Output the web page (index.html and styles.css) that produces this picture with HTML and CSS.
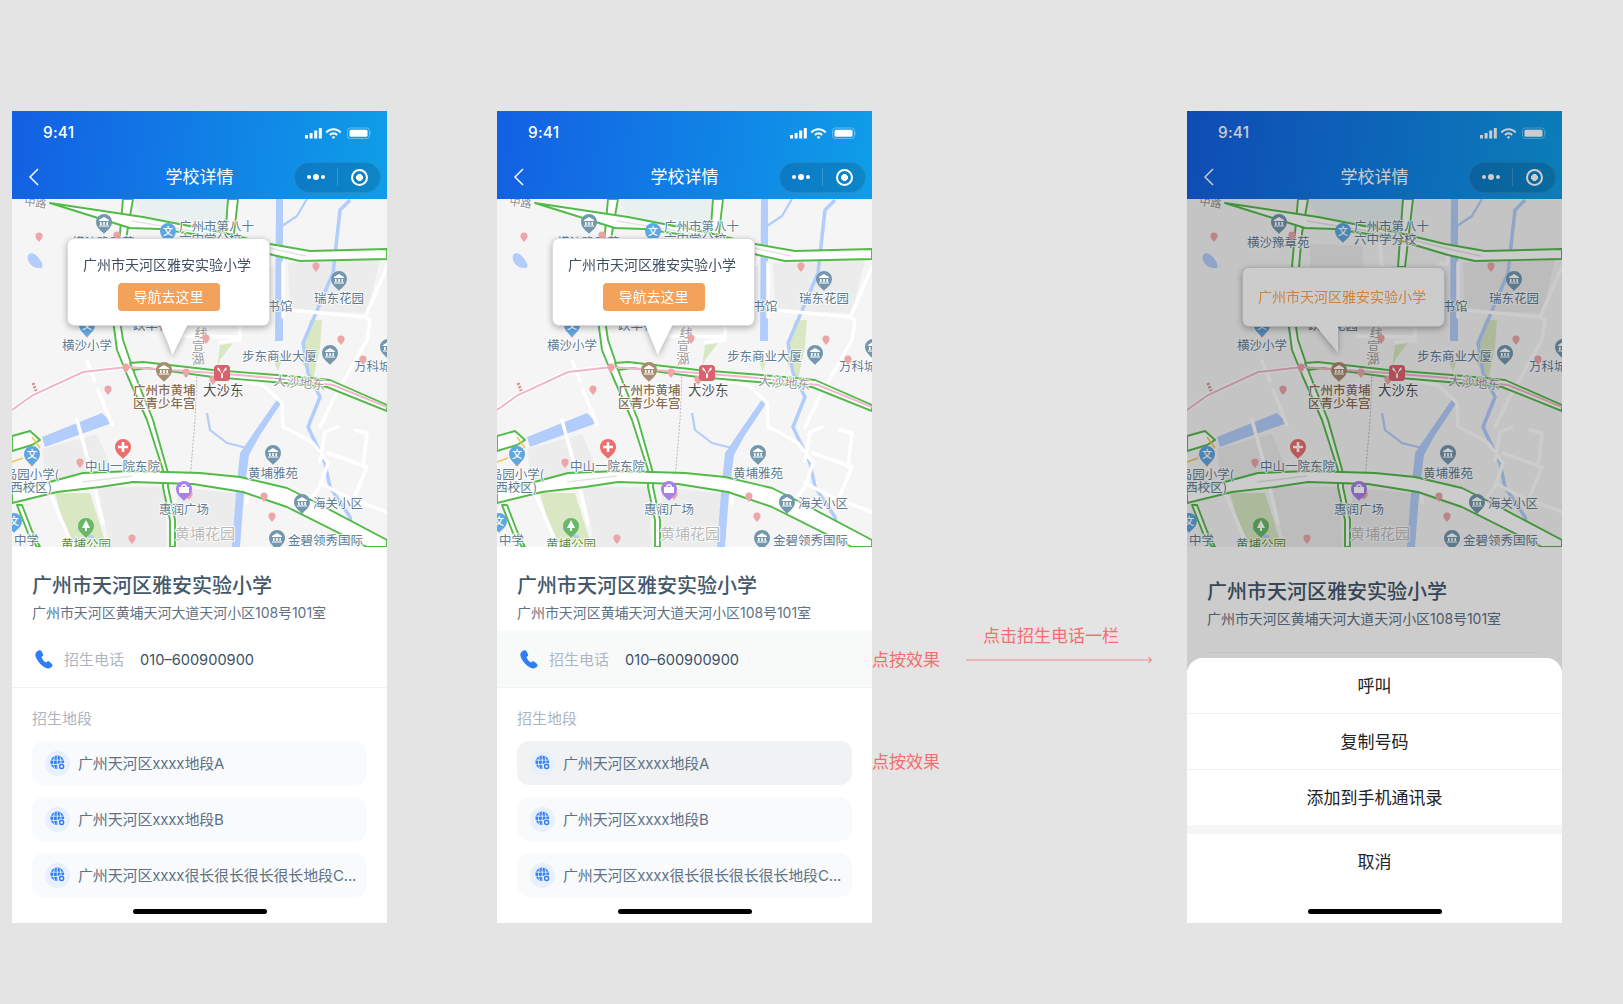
FILE: index.html
```html
<!DOCTYPE html>
<html lang="zh-CN">
<head>
<meta charset="utf-8">
<title>学校详情</title>
<link rel="stylesheet" href="styles.css">
</head>
<body>
<svg class="sprite" xmlns="http://www.w3.org/2000/svg">
  <defs>
    <g id="pt"><path class="c-pink" d="M0 5C-1.6 2.8-3.6 1.4-3.6-1a3.6 3.6 0 0 1 7.2 0C3.6 1.4 1.6 2.8 0 5Z"/></g>
    <g id="pin-shape"><path d="M0 12C-2 9-8 6-8 0a8 8 0 0 1 16 0C8 6 2 9 0 12Z"/></g>
    <g id="bld"><path class="c-white" d="M0-5L5-2V-1H-5V-2ZM-4 0h1.6v3H-4zM-.8 0h1.6v3H-.8zM2.4 0h1.6v3H2.4zM-5 3.4h10v1.2H-5z"/></g>
    <g id="poi" class="c-poi"><use href="#pin-shape"/><use href="#bld"/></g>
    <g id="mus" class="c-mus"><use href="#pin-shape"/><use href="#bld"/></g>
    <g id="edu" class="c-edu"><use href="#pin-shape"/><text class="pin-txt" x="0" y="4">文</text></g>
    <g id="hos" class="c-hos"><use href="#pin-shape"/><path class="c-white" d="M-1.3-5h2.6v3.7H5v2.6H1.3V5h-2.6V1.3H-5v-2.6h3.7Z"/></g>
    <g id="mall" class="c-mall"><use href="#pin-shape"/><path class="c-white" d="M-5-2H5V4H-5ZM-3-2C-3-6 3-6 3-2H1.6C1.6-4-1.6-4-1.6-2Z"/></g>
    <g id="park" class="c-park"><use href="#pin-shape"/><path class="c-white" d="M0-6L4 2H1V5H-1V2H-4Z"/></g>
    <g id="metro"><rect class="c-metro" x="-8" y="-8" width="16" height="16" rx="3.5"/><path class="c-white" d="M-4.5-5.500C-3.500-5.500-3-5-2.500-4L-.9-1V5H.9V-1L2.500-4C3-5 3.500-5.500 4.500-5.500V-3C2.500-2.500 1.500-1 .9 .5H-.9C-1.500-1-2.500-2.500-4.500-3Z"/></g>

    <symbol id="map" viewBox="0 0 375 348">
      <rect class="m-bg" width="375" height="348"/>
      <path class="m-school" d="M121 0H221L215 36 131 18Z"/>
      <path class="m-block" d="M276 64L368 61 355 114 278 111ZM30 250L85 235 100 270 35 290ZM85 288H152L155 348H98ZM165 288L228 295 222 348H165ZM123 45L176 47V90H123Z"/>
      <path class="m-park" d="M298 121H310L308 148 301 181 290 164 291 144ZM208 146L221 144 208 161 205 169ZM43 294H78L95 348H58ZM262 163L270 160 266 172Z"/>

      <path class="m-water" d="M16 56C20 52 25 56 28 61 32 66 31 70 27 69 20 69 14 62 16 56ZM30 238L90 214 100 224 33 248ZM264 0H271V142H263ZM266 199L270 203 248 236 237 256 232 295 228 348H220L224 294 228 254 243 232Z"/>
      <path class="m-river" d="M338 1L328 11 321 74 301 121 291 144 296 174 308 198 296 228 313 264 318 288 338 318 341 338"/>
      <path class="m-river-s" d="M195 214L198 231 215 244 235 249M295 0L285 17 270 27"/>
      <path class="m-pond" d="M66 329C72 334 76 338 82 338"/>

      <path class="m-way" d="M75 162L83 182M86 191L100 226M65 221L76 261 91 324M208 178L251 186 270 204 271 228 278 231 301 244 316 264 308 288 298 301M308 228L321 201 355 141 358 121 353 118 278 111M375 68L353 118M316 254L355 268 341 301M343 231L355 234 351 268M313 233L325 228M308 284L335 298 375 313M38 294L61 348M271 64V118M208 143L228 141 228 128M170 137L226 138M193 47L195 66M253 65L260 65 261 57M235 284V304M313 233L308 262"/>

      <path class="m-rail" d="M21 184L25 194"/>
      <path class="m-metro" d="M185 174L183 221 178 281"/>

      <path class="m-band" d="M111 0L108 34 105 68 101 121 105 151 116 178 135 221 151 271 151 288 158 321 158 348H163L163 321 156 288 156 274 141 221 123 176 111 141 108 121 112 68 115 34 121 0Z"/>
      <path class="m-band" d="M216 0L211 68H218L226 0Z"/>
      <path class="m-band" d="M0 237L18 232 28 241 20 246 0 252ZM5 306L16 334 25 348H28L20 332 10 306Z"/>
      <path class="m-yellow" d="M20 238L28 249M0 263L11 259"/>
      <path class="m-band" d="M38 4L131 18 208 33 258 45 298 52 375 50V60L288 62 261 56 201 38 148 30 118 29Z"/>
      <path class="m-band-tint" d="M120 22L205 36 262 50 294 57"/>
      <path class="m-band" d="M118 164L131 163 201 171 265 176 318 181 375 206V212L315 188 261 183 201 178 135 169 121 171Z"/>
      <path class="m-pink-w" d="M0 211L21 196 71 173 115 168"/>
      <path class="m-pink" d="M0 211L21 196 71 173 115 168 201 174 261 179 321 186 375 208"/>
      <path class="m-band" d="M0 293L45 281 71 274 121 272 188 274 228 278 275 289 305 304 375 341V348H355L275 308 231 293 181 285 121 283 88 288 45 293 0 304Z"/>
      <path class="m-band-tint" d="M70 283L120 277"/>

      <text class="lb lb-s" x="12" y="6" transform="rotate(8 12 6)">中路</text>
      <text class="lb" x="60" y="48">横沙豫章苑</text>
      <text class="lb" x="167" y="32">广州市第八十</text>
      <text class="lb" x="167" y="45">六中学分校</text>
      <text class="lb" x="243" y="112">图书馆</text>
      <text class="lb" x="302" y="104">瑞东花园</text>
      <text class="lb" x="121" y="131">跃华花园</text>
      <text class="lb" x="50" y="151">横沙小学</text>
      <text class="lb" x="230" y="162">步东商业大厦</text>
      <text class="lb" x="342" y="172">万科城</text>
      <text class="lb lb-brown" x="121" y="196">广州市黄埔</text>
      <text class="lb lb-brown" x="121" y="209">区青少年宫</text>
      <text class="lb lb-dark" x="191" y="196">大沙东</text>
      <text class="lb lb-road" x="261" y="186" transform="rotate(5 261 186)">大沙地东</text>
      <text class="lb lb-road" x="182" y="138" transform="rotate(8 182 138)">线</text>
      <text class="lb lb-road" x="180" y="152">宣</text>
      <text class="lb lb-road" x="180" y="166" transform="rotate(-8 180 166)">湖</text>
      <text class="lb" x="73" y="272">中山一院东院</text>
      <text class="lb" x="236" y="279">黄埔雅苑</text>
      <text class="lb" x="301" y="309">海关小区</text>
      <text class="lb" x="147" y="315">惠润广场</text>
      <text class="lb lb-ghost" x="163" y="340">黄埔花园</text>
      <text class="lb" x="276" y="346">金碧领秀国际</text>
      <text class="lb" x="2" y="346">中学</text>
      <text class="lb lb-green" x="49" y="350">黄埔公园</text>
      <text class="lb lb-end" x="47" y="280">岛园小学(</text>
      <text class="lb lb-end" x="40" y="293">西校区)</text>

      <use href="#pt" x="27" y="38"/><use href="#pt" x="105" y="37"/><use href="#pt" x="156" y="38"/><use href="#pt" x="304" y="68"/>
      <use href="#pt" x="75" y="134"/><use href="#pt" x="194" y="140"/><use href="#pt" x="329" y="141"/><use href="#pt" x="351" y="161"/>
      <use href="#pt" x="114" y="169"/><use href="#pt" x="174" y="174"/><use href="#pt" x="201" y="181"/><use href="#pt" x="96" y="191"/>
      <use href="#pt" x="68" y="264"/><use href="#pt" x="20" y="263"/><use href="#pt" x="177" y="296"/><use href="#pt" x="252" y="298"/>
      <use href="#pt" x="260" y="318"/><use href="#pt" x="120" y="340"/>

      <use href="#poi" x="92" y="23"/><use href="#poi" x="327" y="80"/><use href="#poi" x="318" y="154"/><use href="#poi" x="261" y="254"/>
      <use href="#poi" x="290" y="303"/><use href="#poi" x="265" y="339"/><use href="#poi" x="376" y="148"/>
      <use href="#edu" x="156" y="32"/><use href="#edu" x="20" y="255"/><use href="#edu" x="2" y="322"/><use href="#edu" x="75" y="126"/>
      <use href="#mus" x="152" y="171"/><use href="#metro" x="210" y="174"/><use href="#hos" x="111" y="248"/>
      <use href="#mall" x="172" y="290"/><use href="#park" x="74" y="327"/>
    </symbol>

    <symbol id="status" viewBox="0 0 68 12">
      <path class="c-white" d="M1 8h3v3.5H1zM5.600 6h3v5.500h-3zM10.200 3.500h3v8h-3zM14.800 1h3v10.500h-3z"/>
      <path class="c-white" transform="translate(29.500 0) scale(1.05 1.2) translate(-29.500 -1.800)" d="M29.500 2.800C26.500 2.800 24 3.900 22 5.700L23.300 7C24.900 5.500 27.100 4.600 29.500 4.600S34.100 5.500 35.700 7L37 5.700C35 3.900 32.500 2.800 29.500 2.800ZM29.500 6.100C28 6.100 26.500 6.700 25.400 7.800L26.700 9.100C27.400 8.400 28.400 8 29.500 8S31.600 8.400 32.300 9.100L33.600 7.800C32.500 6.700 31 6.100 29.500 6.100ZM27.800 10.200L29.500 11.800 31.200 10.200C30.200 9.400 28.800 9.400 27.800 10.200Z"/>
      <rect class="bat-frame" x="43.500" y="1" width="22" height="10.500" rx="3"/>
      <rect class="c-white" x="45.500" y="2.800" width="18" height="7" rx="1.500"/>
      <path class="bat-nub" d="M66.500 4.500C67.500 5 67.500 7.500 66.500 8Z"/>
    </symbol>

    <symbol id="phone-ic" viewBox="0 0 18 19">
      <path class="c-blue" d="M3.500.5C5-.2 6 .3 6.600 1.500L8 4.200C8.400 5 8.200 5.800 7.500 6.300L6.500 7C7 9 9 11.500 11 12.500L12.300 11.600C13 11.200 13.800 11.300 14.400 11.800L16.800 13.800C17.600 14.500 17.800 15.500 17.200 16.300 16 18 14 19 12 18.300 6.500 16.500 1.500 10.500.4 5.500 0 3.500 1.500 1.300 3.500.5Z"/>
    </symbol>

    <symbol id="globe" viewBox="0 0 16 16">
      <circle class="c-blue" cx="7.500" cy="7.500" r="7"/>
      <path class="globe-line" d="M1 5.300H14M1 9.700H14M7.500 .5V14.500M4.800 1.500C3.300 5 3.300 10 4.800 13.500M10.200 1.500C11.700 5 11.700 10 10.200 13.500"/>
      <circle class="c-white" cx="12" cy="11.800" r="3.900"/>
      <circle class="globe-ring" cx="12" cy="11.800" r="2.100"/>
    </symbol>

    <symbol id="chev" viewBox="0 0 10 18"><path class="chev" d="M9 1L1 9 9 17"/></symbol>
  </defs>
</svg>

<main class="board">

  <section class="phone">
    <header class="head">
      <div class="status"><span class="time">9:41</span><svg class="status-ic"><use href="#status"/></svg></div>
      <div class="nav">
        <svg class="back"><use href="#chev"/></svg>
        <div class="nav-title">学校详情</div>
        <div class="capsule"><span class="dots"><i></i><i class="big"></i><i></i></span><span class="cap-sep"></span><span class="target"></span></div>
      </div>
    </header>
    <div class="map">
      <svg class="map-canvas"><use href="#map"/></svg>
      <div class="pop">
        <div class="pop-title">广州市天河区雅安实验小学</div>
        <div class="pop-btn">导航去这里</div>
        <span class="pop-tail"></span>
      </div>
    </div>
    <div class="info">
      <h1 class="name">广州市天河区雅安实验小学</h1>
      <p class="addr">广州市天河区黄埔天河大道天河小区108号101室</p>
      <div class="tel"><svg class="tel-ic"><use href="#phone-ic"/></svg><span class="tel-label">招生电话</span><span class="tel-num">010–600900900</span></div>
      <div class="sec">招生地段</div>
      <ul class="areas">
        <li class="area"><span class="area-ic"><svg class="globe-svg"><use href="#globe"/></svg></span><span class="area-txt">广州天河区xxxx地段A</span></li>
        <li class="area"><span class="area-ic"><svg class="globe-svg"><use href="#globe"/></svg></span><span class="area-txt">广州天河区xxxx地段B</span></li>
        <li class="area"><span class="area-ic"><svg class="globe-svg"><use href="#globe"/></svg></span><span class="area-txt">广州天河区xxxx很长很长很长很长地段C...</span></li>
      </ul>
    </div>
    <span class="home"></span>
  </section>

  <section class="phone phone-b">
    <header class="head">
      <div class="status"><span class="time">9:41</span><svg class="status-ic"><use href="#status"/></svg></div>
      <div class="nav">
        <svg class="back"><use href="#chev"/></svg>
        <div class="nav-title">学校详情</div>
        <div class="capsule"><span class="dots"><i></i><i class="big"></i><i></i></span><span class="cap-sep"></span><span class="target"></span></div>
      </div>
    </header>
    <div class="map">
      <svg class="map-canvas"><use href="#map"/></svg>
      <div class="pop">
        <div class="pop-title">广州市天河区雅安实验小学</div>
        <div class="pop-btn">导航去这里</div>
        <span class="pop-tail"></span>
      </div>
    </div>
    <div class="info">
      <h1 class="name">广州市天河区雅安实验小学</h1>
      <p class="addr">广州市天河区黄埔天河大道天河小区108号101室</p>
      <div class="tel tel-on"><svg class="tel-ic"><use href="#phone-ic"/></svg><span class="tel-label">招生电话</span><span class="tel-num">010–600900900</span></div>
      <div class="sec">招生地段</div>
      <ul class="areas">
        <li class="area area-on"><span class="area-ic"><svg class="globe-svg"><use href="#globe"/></svg></span><span class="area-txt">广州天河区xxxx地段A</span></li>
        <li class="area"><span class="area-ic"><svg class="globe-svg"><use href="#globe"/></svg></span><span class="area-txt">广州天河区xxxx地段B</span></li>
        <li class="area"><span class="area-ic"><svg class="globe-svg"><use href="#globe"/></svg></span><span class="area-txt">广州天河区xxxx很长很长很长很长地段C...</span></li>
      </ul>
    </div>
    <span class="home"></span>
  </section>

  <aside class="notes">
    <div class="press-col">
      <div class="press">点按效果</div>
      <div class="press press-2">点按效果</div>
    </div>
    <div class="flow">
      <div class="flow-cap">点击招生电话一栏</div>
      <svg class="flow-arrow" viewBox="0 0 186 8"><path class="arrow-line" d="M0 4H185M182.500 1L185.500 4 182.500 7"/></svg>
    </div>
  </aside>

  <section class="phone phone-c">
    <header class="head">
      <div class="status"><span class="time">9:41</span><svg class="status-ic"><use href="#status"/></svg></div>
      <div class="nav">
        <svg class="back"><use href="#chev"/></svg>
        <div class="nav-title">学校详情</div>
        <div class="capsule"><span class="dots"><i></i><i class="big"></i><i></i></span><span class="cap-sep"></span><span class="target"></span></div>
      </div>
    </header>
    <div class="map">
      <svg class="map-canvas"><use href="#map"/></svg>
      <div class="pop pop-mini">
        <div class="pop-title pop-orange">广州市天河区雅安实验小学</div>
        <span class="pop-tail"></span>
      </div>
    </div>
    <div class="info info-c">
      <h1 class="name">广州市天河区雅安实验小学</h1>
      <p class="addr">广州市天河区黄埔天河大道天河小区108号101室</p>
      <div class="rule"></div>
    </div>
    <div class="scrim"></div>
    <div class="sheet">
      <div class="sheet-item">呼叫</div>
      <div class="sheet-item">复制号码</div>
      <div class="sheet-item sheet-last">添加到手机通讯录</div>
      <div class="sheet-cancel">取消</div>
    </div>
    <span class="home"></span>
  </section>

</main>
</body>
</html>
```

FILE: styles.css
```css
* { box-sizing: border-box; }
html, body { margin: 0; padding: 0; }
body {
  width: 1623px;
  height: 1004px;
  overflow: hidden;
  background: #e4e4e4;
  font-family: Inter, "Noto Sans CJK SC", sans-serif;
}
.sprite { display: none; }

.board { display: flex; align-items: flex-start; padding: 111px 0 0 12px; }
.phone {
  position: relative;
  flex: none;
  width: 375px;
  height: 812px;
  overflow: hidden;
  background: #fff;
}
.phone-b { margin-left: 110px; }

/* header */
.head { height: 88px; color: #fff; background: linear-gradient(98deg, #135fe3, #0e9ee8); }
.status { height: 44px; display: flex; align-items: center; justify-content: space-between; padding: 0 15px 0 31px; }
.time { padding-bottom: 1px; font-size: 15.300px; font-weight: 500; letter-spacing: .3px; }
.status-ic { width: 68px; height: 12px; }
.nav { height: 44px; display: grid; grid-template-columns: 1fr auto 1fr; align-items: center; padding: 0 6px; }
.back { width: 10px; height: 18px; margin-left: 11px; }
.chev { fill: none; stroke: #fff; stroke-width: 1.500; }
.nav-title { font-size: 17px; font-weight: 400; line-height: 24px; }
.capsule {
  justify-self: end;
  width: 87px;
  height: 31px;
  display: flex;
  align-items: center;
  border-radius: 16px;
  background: rgba(0, 0, 0, .14);
  border: 1px solid rgba(255, 255, 255, .08);
}
.dots { width: 42px; display: flex; align-items: center; justify-content: center; gap: 2px; }
.dots i { width: 4px; height: 4px; border-radius: 50%; background: #fff; }
.dots i.big { width: 6.500px; height: 6.500px; }
.cap-sep { width: 1px; height: 18px; background: rgba(255, 255, 255, .18); }
.target {
  width: 17px; height: 17px; margin-left: 13px;
  border: 2px solid #fff; border-radius: 50%;
  background: radial-gradient(circle, #fff 0 3.200px, transparent 3.700px);
}

/* map */
.map { position: relative; height: 348px; overflow: hidden; }
.map-canvas { display: block; width: 375px; height: 348px; }
.m-bg { fill: #f5f5f5; }
.m-school { fill: #e8f0f0; }
.m-block { fill: #ececec; }
.m-park { fill: #d9e8c2; }
.m-water { fill: #b2cdfb; }
.m-river { fill: none; stroke: #b2cdfb; stroke-width: 3.500; stroke-linejoin: round; }
.m-river-s { fill: none; stroke: #b2cdfb; stroke-width: 2.200; stroke-linejoin: round; }
.m-pond { fill: none; stroke: #b2cdfb; stroke-width: 3; }
.m-way { fill: none; stroke: #fff; stroke-width: 3.500; stroke-linejoin: round; stroke-linecap: round; }
.m-rail { fill: none; stroke: #d98a8a; stroke-width: 3; stroke-dasharray: 2 1.500; }
.m-metro { fill: none; stroke: #b9b9b9; stroke-width: 1; stroke-dasharray: 2 1.500; }
.m-band { fill: #fff; stroke: #52ba48; stroke-width: 1.900; stroke-linejoin: round; }
.m-band-tint { fill: none; stroke: #e3e3e3; stroke-width: 1.500; }
.m-yellow { fill: none; stroke: #f4c24e; stroke-width: 1.400; }
.m-pink-w { fill: none; stroke: #fff; stroke-width: 4.500; }
.m-pink { fill: none; stroke: #eeb6c8; stroke-width: 2; }

.lb {
  font: 400 12.500px "Noto Sans CJK SC", sans-serif;
  fill: #5d7b95;
  stroke: rgba(255, 255, 255, .85);
  stroke-width: 2px;
  paint-order: stroke;
  stroke-linejoin: round;
}
.lb-s { font-size: 11px; fill: #8b8b8b; }
.lb-brown { fill: #8a6c50; font-weight: 500; }
.lb-dark { fill: #4e4e4e; font-size: 13.500px; }
.lb-road { fill: #9b9b9b; font-size: 13px; }
.lb-ghost { fill: #b9b9b9; font-size: 15px; }
.lb-green { fill: #5d8f48; }
.lb-end { text-anchor: end; }
.pin-txt { font: 500 10px "Noto Sans CJK SC", sans-serif; fill: #fff; text-anchor: middle; }

.c-pink { fill: #eca6a8; }
.c-white { fill: #fff; }
.c-blue { fill: #2f7ef5; }
.c-poi { fill: #7398ae; }
.c-mus { fill: #a98d70; }
.c-edu { fill: #5fa7e2; }
.c-hos { fill: #ec6d6d; }
.c-mall { fill: #a97fe9; }
.c-park { fill: #68b868; }
.c-metro { fill: #d9626e; }
.bat-frame { fill: none; stroke: rgba(255, 255, 255, .35); stroke-width: 1; }
.bat-nub { fill: rgba(255, 255, 255, .4); }
.globe-line { fill: none; stroke: #fff; stroke-width: .8; }
.globe-ring { fill: none; stroke: #2f7ef5; stroke-width: 1.600; }

/* popup */
.pop {
  position: absolute;
  left: 55px;
  top: 39px;
  width: 203px;
  height: 88px;
  background: #fff;
  border: 1px solid #d8dadd;
  border-radius: 7px;
  filter: drop-shadow(0 2px 3px rgba(0, 0, 0, .3));
  text-align: center;
}
.pop-title { margin-top: 16px; padding-right: 3px; font-size: 14px; line-height: 20px; color: #3f5063; }
.pop-btn {
  width: 102px; height: 28px; margin: 8px auto 0;
  border-radius: 4px;
  background: #f2a25a;
  color: #fff;
  font-size: 14px;
  line-height: 28px;
}
.pop-tail {
  position: absolute;
  left: 92px;
  top: 85px;
  width: 28px;
  height: 31px;
  background: #fff;
  clip-path: polygon(0 0, 100% 0, 45% 100%);
}
.pop-mini { top: 68px; height: 60px; }
.pop-mini .pop-title { margin-top: 19px; }
.pop-orange { color: #ffa64d; }
.pop-mini .pop-tail { left: 72px; top: 57px; width: 23px; height: 28px; clip-path: polygon(0 0, 100% 0, 100% 100%); }

/* info */
.name { margin: 0; padding: 25px 20px 0; font-size: 20px; font-weight: 500; line-height: 28px; color: #44586c; }
.addr { margin: 3px 0 0; padding: 0 20px; font-size: 14px; line-height: 20px; letter-spacing: -.06px; color: #5f7285; }
.tel { margin-top: 8px; height: 57px; display: flex; align-items: center; padding: 0 23px; border-bottom: 1px solid #f0f2f3; }
.tel-on { background: #f8fafa; }
.tel-ic { width: 18px; height: 19px; flex: none; }
.tel-label { margin-left: 11px; padding-bottom: 2px; font-size: 15px; color: #acb6c2; }
.tel-num { margin-left: 16px; padding-top: 1px; font-size: 14.600px; color: #3d5166; }
.sec { margin-top: 20px; padding: 0 20px; font-size: 15px; line-height: 22px; color: #acb6c2; }
.areas { list-style: none; margin: 11px 0 0; padding: 0 20px; display: flex; flex-direction: column; gap: 12px; }
.area { height: 44px; display: flex; align-items: center; padding: 0 13px; border-radius: 12px; background: #f8fafb; }
.area-on { background: #f0f2f4; }
.area-ic { width: 25px; height: 25px; flex: none; display: flex; align-items: center; justify-content: center; border-radius: 50%; background: #e8f0fe; }
.globe-svg { width: 15.500px; height: 15.500px; }
.area-txt { margin-left: 8px; padding-bottom: 2px; font-size: 15px; letter-spacing: -.15px; color: #5f7285; white-space: nowrap; }
.home { position: absolute; left: 121px; bottom: 9px; width: 134px; height: 5px; border-radius: 3px; background: #000; z-index: 3; }

/* third phone */
.info-c .name { padding-top: 31px; }
.rule { margin: 23px 20px 0; height: 1px; background: #f6f6f6; }
.scrim { position: absolute; inset: 0; background: rgba(0, 0, 0, .2); z-index: 1; }
.sheet {
  position: absolute; left: 0; right: 0; bottom: 0; z-index: 2;
  background: #f5f5f5;
  border-radius: 16px 16px 0 0;
  overflow: hidden;
}
.sheet-item {
  height: 56px; background: #fff; text-align: center;
  font-size: 17px; line-height: 57px; color: #222;
  border-bottom: 1px solid #f0f0f0;
}
.sheet-last { height: 55px; border-bottom: 0; }
.sheet-cancel {
  margin-top: 9px; height: 89px; background: #fff; text-align: center;
  font-size: 17px; line-height: 56px; color: #222;
}

/* notes */
.notes { flex: none; width: 315px; display: flex; color: #f56e6e; }
.press-col { width: 94px; padding-top: 537px; }
.press { font-size: 17px; line-height: 24px; white-space: nowrap; }
.press-2 { margin-top: 78px; }
.flow { padding-top: 513px; }
.flow-cap { margin-left: 17px; font-size: 17px; line-height: 24px; white-space: nowrap; }
.flow-arrow { display: block; width: 186px; height: 8px; margin-top: 8px; }
.arrow-line { fill: none; stroke: #ef8c8c; stroke-width: 1.200; }
```
